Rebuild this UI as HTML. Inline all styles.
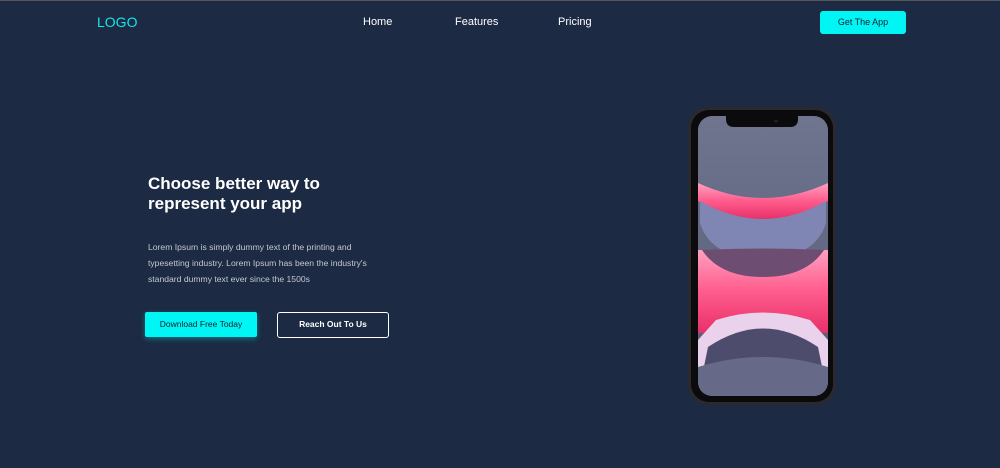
<!DOCTYPE html>
<html><head><meta charset="utf-8"><style>
*{margin:0;padding:0;box-sizing:border-box}
html,body{width:1000px;height:468px;overflow:hidden;background:#1c2a43;font-family:"Liberation Sans",sans-serif}
.top{position:absolute;left:0;top:0;width:1000px;height:1px;background:#555}
.logo{position:absolute;left:97px;top:14px;color:#14e6ea;font-size:14px}
.nav{position:absolute;top:16px;color:#fff;font-size:11px}
.get{position:absolute;left:820px;top:11px;width:86px;height:23px;background:#00f5f5;border-radius:3px;color:#102030;font-size:9px;text-align:center;line-height:23px}
h1{position:absolute;left:148px;top:174px;color:#fff;font-size:17px;font-weight:bold;line-height:20px}
p{position:absolute;left:148px;top:239px;color:#c4c9d4;font-size:8.6px;line-height:16px;white-space:nowrap}
.b1{position:absolute;left:145px;top:312px;width:112px;height:25px;background:#00f5f5;border-radius:2px;color:#102030;font-size:8.5px;text-align:center;line-height:25px;box-shadow:0 2px 6px rgba(0,240,240,.35)}
.b2{position:absolute;left:277px;top:312px;width:112px;height:26px;border:1.5px solid #fff;border-radius:3px;color:#fff;font-size:8.5px;font-weight:bold;text-align:center;line-height:23px}
svg{position:absolute;left:686px;top:105px}
</style></head><body>
<div class="top"></div>
<div class="logo">LOGO</div>
<div class="nav" style="left:363px">Home</div>
<div class="nav" style="left:455px">Features</div>
<div class="nav" style="left:558px">Pricing</div>
<div class="get">Get The App</div>
<h1>Choose better way to<br>represent your app</h1>
<p>Lorem Ipsum is simply dummy text of the printing and<br>typesetting industry. Lorem Ipsum has been the industry's<br>standard dummy text ever since the 1500s</p>
<div class="b1">Download Free Today</div>
<div class="b2">Reach Out To Us</div>
<svg width="152" height="302" viewBox="0 0 152 302">
<defs><clipPath id="c"><rect x="12" y="11" width="130" height="280" rx="14"/></clipPath>
<linearGradient id="pk" x1="0" y1="0" x2="0" y2="1"><stop offset="0" stop-color="#ffa0c0"/><stop offset=".5" stop-color="#ff5c8c"/><stop offset="1" stop-color="#e8306a"/></linearGradient>
<linearGradient id="gr" x1="0" y1="0" x2="0" y2="1"><stop offset="0" stop-color="#70758f"/><stop offset="1" stop-color="#555a75"/></linearGradient></defs>
<rect x="2" y="2" width="148" height="298" rx="20" fill="#2a2a2e"/>
<rect x="5" y="5" width="142" height="292" rx="18" fill="#0b0b0d"/>
<g clip-path="url(#c)">
<rect x="12" y="11" width="130" height="280" fill="url(#gr)"/>
<path d="M12 78 Q77 108 142 78 L142 96 Q77 132 12 96Z" fill="url(#pk)"/>
<path d="M14 96 Q77 132 140 96 L140 118 Q130 152 77 156 Q24 152 14 118Z" fill="#7f86b3"/>
<path d="M12 145 L142 145 L142 228 L12 228Z" fill="url(#pk)"/>
<path d="M16 145 Q77 142 138 145 Q120 172 77 172 Q34 172 16 145Z" fill="#6e4d72"/>
<path d="M12 235 L30 215 Q77 200 124 215 L142 235 L142 262 L12 262Z" fill="#ead2ec"/>
<path d="M22 242 Q77 205 132 242 L142 291 L12 291Z" fill="#4e4c6c"/>
<path d="M12 262 Q77 242 142 262 L142 291 L12 291Z" fill="#666a88"/>
</g>
<path d="M40 11 L112 11 L112 14 Q112 22 104 22 L48 22 Q40 22 40 14Z" fill="#0b0b0d"/>
<circle cx="90" cy="16" r="1.5" fill="#223"/>
</svg>
</body></html>
